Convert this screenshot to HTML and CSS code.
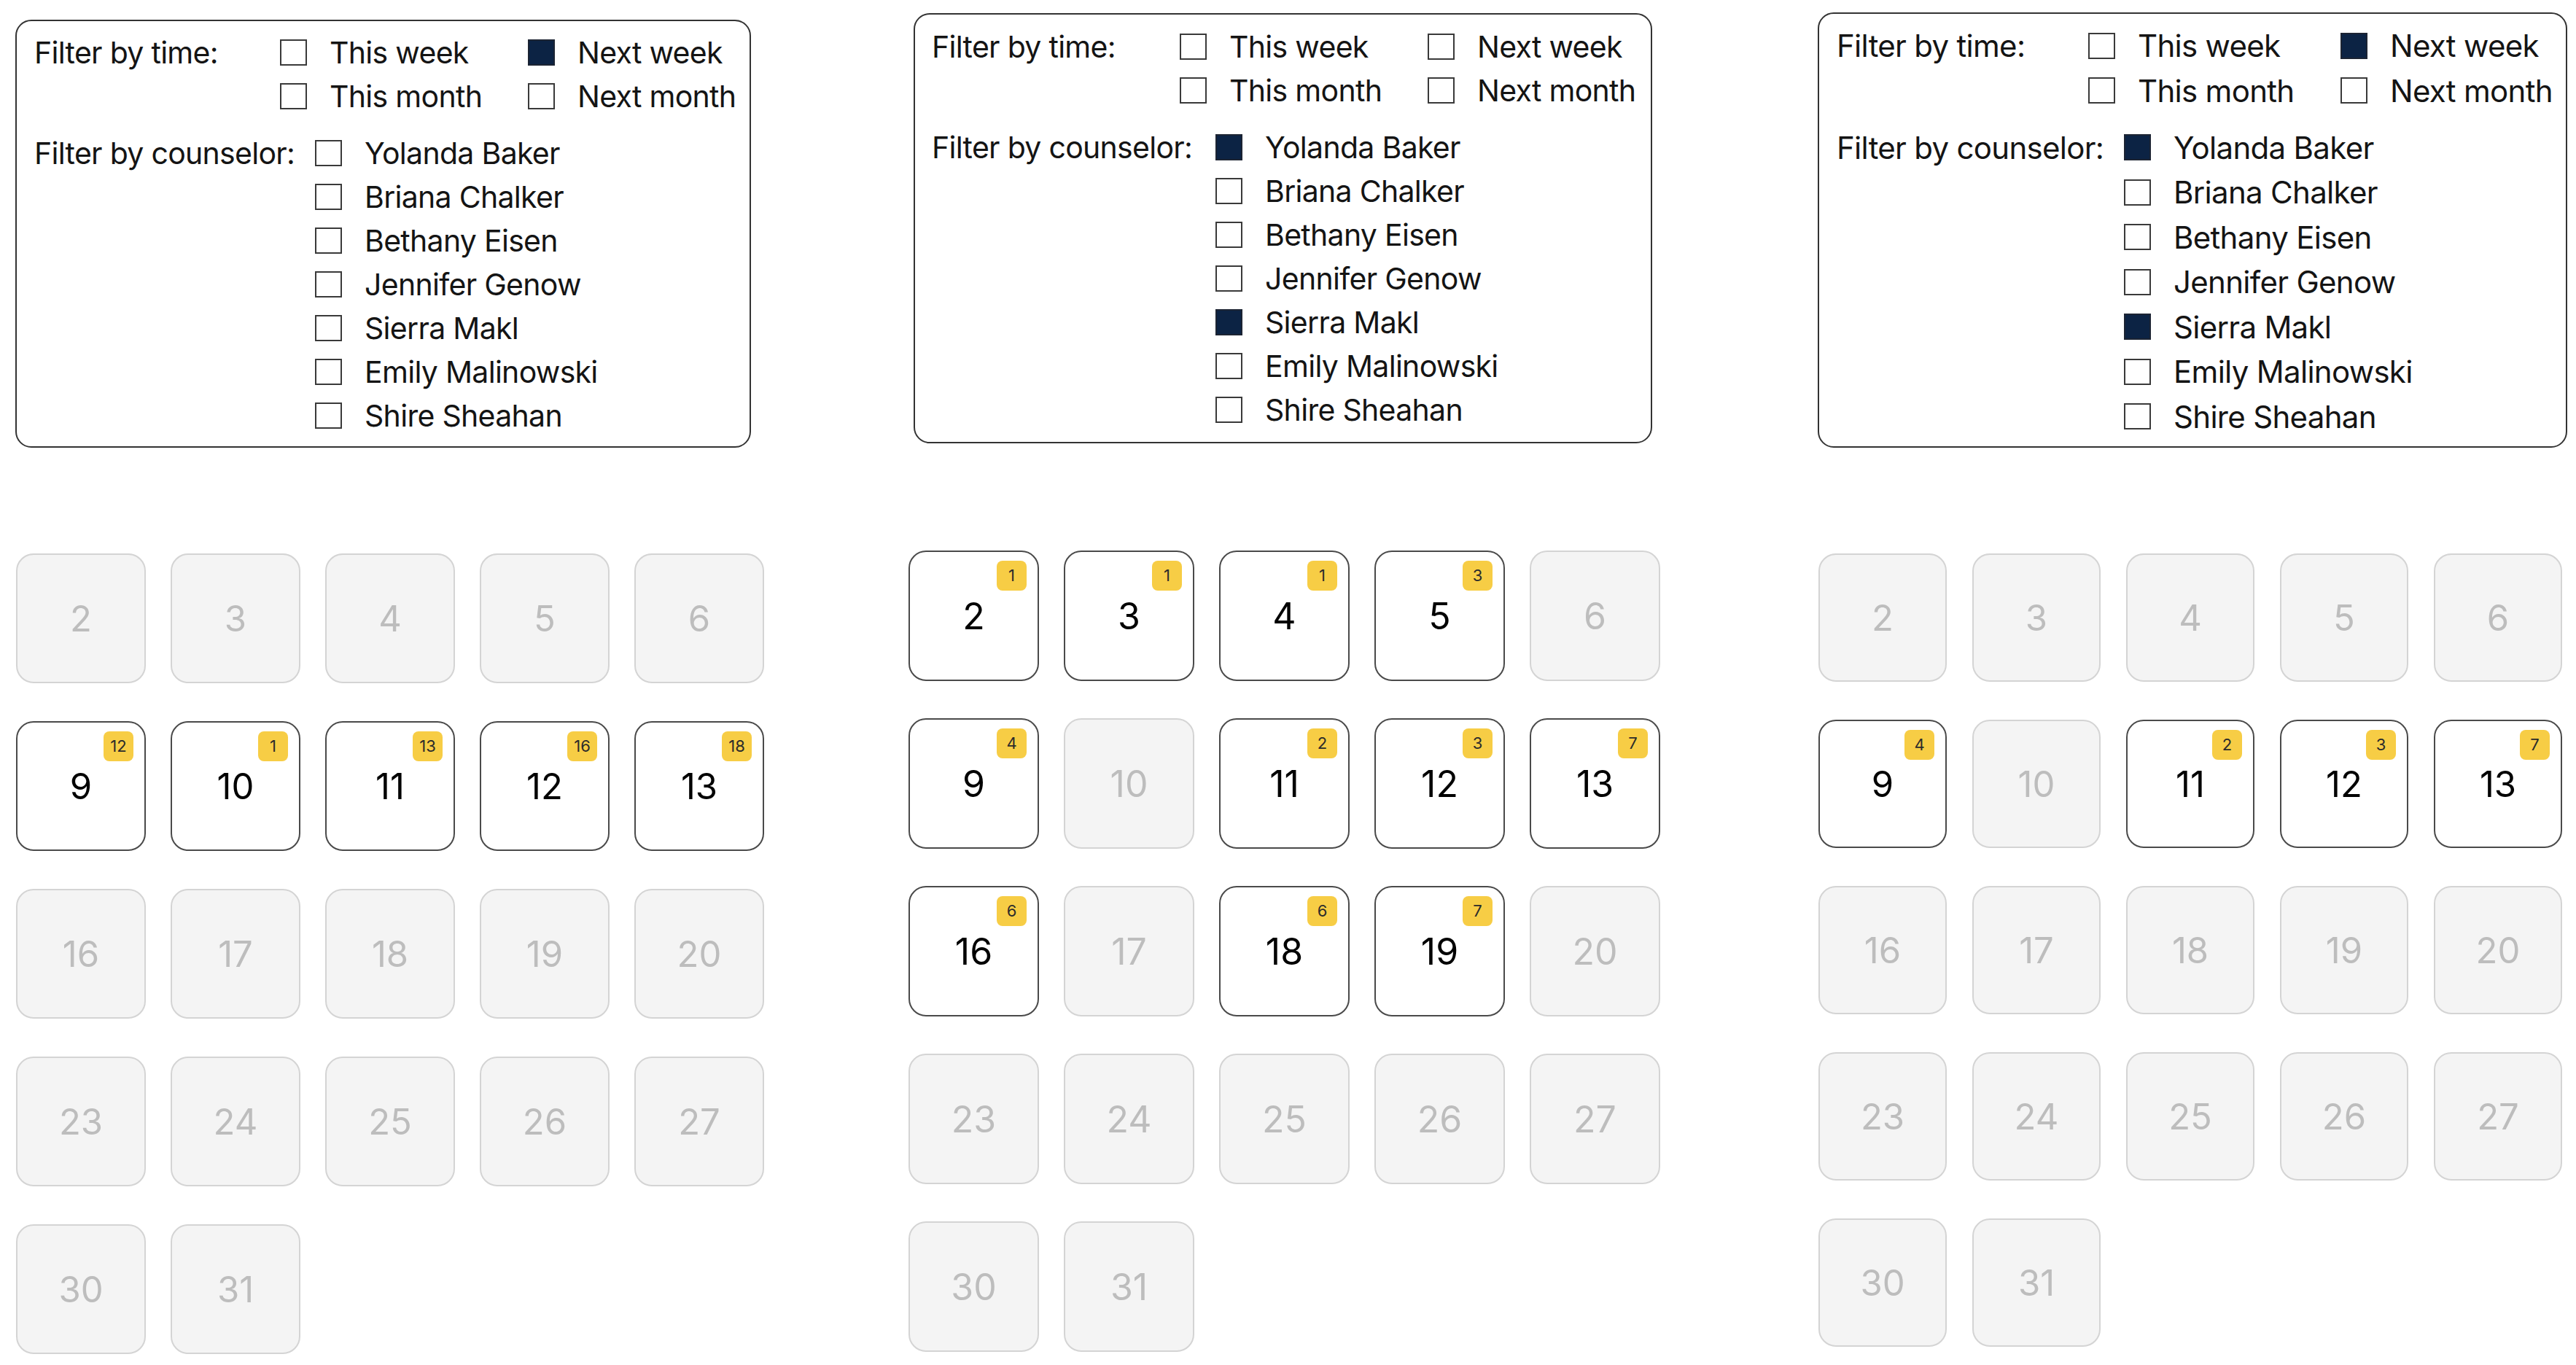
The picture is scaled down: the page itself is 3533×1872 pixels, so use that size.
FILE: index.html
```html
<!DOCTYPE html>
<html lang="en">
<head>
<meta charset="utf-8">
<title>Counselor calendar filters</title>
<link rel="stylesheet" href="styles.css">
</head>
<body>
<div class="page">

  <section class="screen s1">
    <div class="filters">
      <div class="frow">
        <div class="flabel time-label">Filter by time:</div>
        <div class="time-opts">
          <div class="opt"><span class="cb"></span>This week</div>
          <div class="opt"><span class="cb on"></span>Next week</div>
          <div class="opt"><span class="cb"></span>This month</div>
          <div class="opt"><span class="cb"></span>Next month</div>
        </div>
      </div>
      <div class="frow counselor-row">
        <div class="flabel counselor-label">Filter by counselor:</div>
        <div class="counselor-opts">
          <div class="opt"><span class="cb"></span>Yolanda Baker</div>
          <div class="opt"><span class="cb"></span>Briana Chalker</div>
          <div class="opt"><span class="cb"></span>Bethany Eisen</div>
          <div class="opt"><span class="cb"></span>Jennifer Genow</div>
          <div class="opt"><span class="cb"></span>Sierra Makl</div>
          <div class="opt"><span class="cb"></span>Emily Malinowski</div>
          <div class="opt"><span class="cb"></span>Shire Sheahan</div>
        </div>
      </div>
    </div>
    <div class="cal">
      <div class="day off">2</div><div class="day off">3</div><div class="day off">4</div><div class="day off">5</div><div class="day off">6</div>
      <div class="day on">9<span class="badge">12</span></div>
      <div class="day on">10<span class="badge">1</span></div>
      <div class="day on">11<span class="badge">13</span></div>
      <div class="day on">12<span class="badge">16</span></div>
      <div class="day on">13<span class="badge">18</span></div>
      <div class="day off">16</div><div class="day off">17</div><div class="day off">18</div><div class="day off">19</div><div class="day off">20</div>
      <div class="day off">23</div><div class="day off">24</div><div class="day off">25</div><div class="day off">26</div><div class="day off">27</div>
      <div class="day off">30</div><div class="day off">31</div>
    </div>
  </section>

  <section class="screen s2">
    <div class="filters">
      <div class="frow">
        <div class="flabel time-label">Filter by time:</div>
        <div class="time-opts">
          <div class="opt"><span class="cb"></span>This week</div>
          <div class="opt"><span class="cb"></span>Next week</div>
          <div class="opt"><span class="cb"></span>This month</div>
          <div class="opt"><span class="cb"></span>Next month</div>
        </div>
      </div>
      <div class="frow counselor-row">
        <div class="flabel counselor-label">Filter by counselor:</div>
        <div class="counselor-opts">
          <div class="opt"><span class="cb on"></span>Yolanda Baker</div>
          <div class="opt"><span class="cb"></span>Briana Chalker</div>
          <div class="opt"><span class="cb"></span>Bethany Eisen</div>
          <div class="opt"><span class="cb"></span>Jennifer Genow</div>
          <div class="opt"><span class="cb on"></span>Sierra Makl</div>
          <div class="opt"><span class="cb"></span>Emily Malinowski</div>
          <div class="opt"><span class="cb"></span>Shire Sheahan</div>
        </div>
      </div>
    </div>
    <div class="cal">
      <div class="day on">2<span class="badge">1</span></div>
      <div class="day on">3<span class="badge">1</span></div>
      <div class="day on">4<span class="badge">1</span></div>
      <div class="day on">5<span class="badge">3</span></div>
      <div class="day off">6</div>
      <div class="day on">9<span class="badge">4</span></div>
      <div class="day off">10</div>
      <div class="day on">11<span class="badge">2</span></div>
      <div class="day on">12<span class="badge">3</span></div>
      <div class="day on">13<span class="badge">7</span></div>
      <div class="day on">16<span class="badge">6</span></div>
      <div class="day off">17</div>
      <div class="day on">18<span class="badge">6</span></div>
      <div class="day on">19<span class="badge">7</span></div>
      <div class="day off">20</div>
      <div class="day off">23</div><div class="day off">24</div><div class="day off">25</div><div class="day off">26</div><div class="day off">27</div>
      <div class="day off">30</div><div class="day off">31</div>
    </div>
  </section>

  <section class="screen s3">
    <div class="filters">
      <div class="frow">
        <div class="flabel time-label">Filter by time:</div>
        <div class="time-opts">
          <div class="opt"><span class="cb"></span>This week</div>
          <div class="opt"><span class="cb on"></span>Next week</div>
          <div class="opt"><span class="cb"></span>This month</div>
          <div class="opt"><span class="cb"></span>Next month</div>
        </div>
      </div>
      <div class="frow counselor-row">
        <div class="flabel counselor-label">Filter by counselor:</div>
        <div class="counselor-opts">
          <div class="opt"><span class="cb on"></span>Yolanda Baker</div>
          <div class="opt"><span class="cb"></span>Briana Chalker</div>
          <div class="opt"><span class="cb"></span>Bethany Eisen</div>
          <div class="opt"><span class="cb"></span>Jennifer Genow</div>
          <div class="opt"><span class="cb on"></span>Sierra Makl</div>
          <div class="opt"><span class="cb"></span>Emily Malinowski</div>
          <div class="opt"><span class="cb"></span>Shire Sheahan</div>
        </div>
      </div>
    </div>
    <div class="cal">
      <div class="day off">2</div><div class="day off">3</div><div class="day off">4</div><div class="day off">5</div><div class="day off">6</div>
      <div class="day on">9<span class="badge">4</span></div>
      <div class="day off">10</div>
      <div class="day on">11<span class="badge">2</span></div>
      <div class="day on">12<span class="badge">3</span></div>
      <div class="day on">13<span class="badge">7</span></div>
      <div class="day off">16</div><div class="day off">17</div><div class="day off">18</div><div class="day off">19</div><div class="day off">20</div>
      <div class="day off">23</div><div class="day off">24</div><div class="day off">25</div><div class="day off">26</div><div class="day off">27</div>
      <div class="day off">30</div><div class="day off">31</div>
    </div>
  </section>

</div>
</body>
</html>
```

FILE: styles.css
```css
* { box-sizing: border-box; }

html, body {
  margin: 0;
  padding: 0;
  background: #ffffff;
}

body {
  font-family: Inter, "Noto Sans", "Liberation Sans", sans-serif;
  color: #141414;
}

.page {
  display: flex;
  align-items: flex-start;
  width: 3533px;
  height: 1872px;
  overflow: hidden;
}

/* per-screen metrics */
.screen {
  --fs: 41px;
  --ls: -0.7px;
  --row: 60px;
  --tl: 337px;
  --cl: 385px;
  --col: 340px;
  --blockgap: 18px;
  --card: 178px;
  --cgap: 34px;
  --rgap: 52px;
  --num: 49px;
  display: flex;
  flex-direction: column;
  flex: none;
}

.s1 {
  width: 1225px;
  margin-left: 21px;
  padding-top: 27px;
}
.s1 .filters { width: 1009px; padding: 13px 20px 12px 24px; }
.s1 .cal { margin-top: 145px; margin-left: 1px; }

.s2 {
  width: 1247px;
  padding-top: 18px;
  --tl: 340px;
  --cl: 389px;
  --card: 179px;
  --cgap: 34px;
  --rgap: 51px;
  --num: 50px;
}
.s2 .filters { width: 1013px; margin-left: 7px; padding: 14px 20px 14px 23px; }
.s2 .cal { margin-top: 147px; }

.s3 {
  width: 1040px;
  padding-top: 17px;
  --fs: 42px;
  --row: 61.5px;
  --tl: 345px;
  --cl: 394px;
  --col: 346px;
  --blockgap: 16.5px;
  --card: 176px;
  --cgap: 35px;
  --rgap: 52px;
  --num: 49px;
}
.s3 .filters { width: 1028px; padding: 13px 20px 10px 24px; }
.s3 .cal { margin-top: 145px; margin-left: 1px; }

/* filter panel */
.filters {
  border: 2px solid #333333;
  border-radius: 22px;
  font-size: var(--fs);
  letter-spacing: var(--ls);
  display: flex;
  flex-direction: column;
  gap: var(--blockgap);
}

.frow {
  display: flex;
  align-items: flex-start;
}

.flabel {
  flex: none;
  height: var(--row);
  line-height: var(--row);
  white-space: nowrap;
}
.time-label { width: var(--tl); }
.counselor-label { width: var(--cl); }

.time-opts {
  display: grid;
  grid-template-columns: var(--col) auto;
}

.counselor-opts {
  display: flex;
  flex-direction: column;
}

.opt {
  display: flex;
  align-items: center;
  gap: 31px;
  height: var(--row);
  white-space: nowrap;
}

.cb {
  flex: none;
  width: 37px;
  height: 36px;
  border: 2px solid #3a3a3a;
  background: #ffffff;
}
.cb.on {
  background: #0c2344;
  border-color: #1c2433;
}

/* calendar */
.cal {
  display: grid;
  grid-template-columns: repeat(5, var(--card));
  grid-auto-rows: var(--card);
  column-gap: var(--cgap);
  row-gap: var(--rgap);
}

.day {
  position: relative;
  display: flex;
  align-items: center;
  justify-content: center;
  border-radius: 24px;
  font-size: var(--num);
  line-height: 1;
}

.day.off {
  background: #f4f4f4;
  border: 2px solid #d4d4d4;
  color: #bdbdbd;
}

.day.on {
  background: #ffffff;
  border: 2px solid #4a4a4a;
  color: #000000;
}

.badge {
  position: absolute;
  top: 12px;
  right: 15px;
  width: 41px;
  height: 41px;
  border-radius: 8px;
  background: #f7cd45;
  color: #2b2b2b;
  font-size: 22px;
  line-height: 41px;
  text-align: center;
}
```
